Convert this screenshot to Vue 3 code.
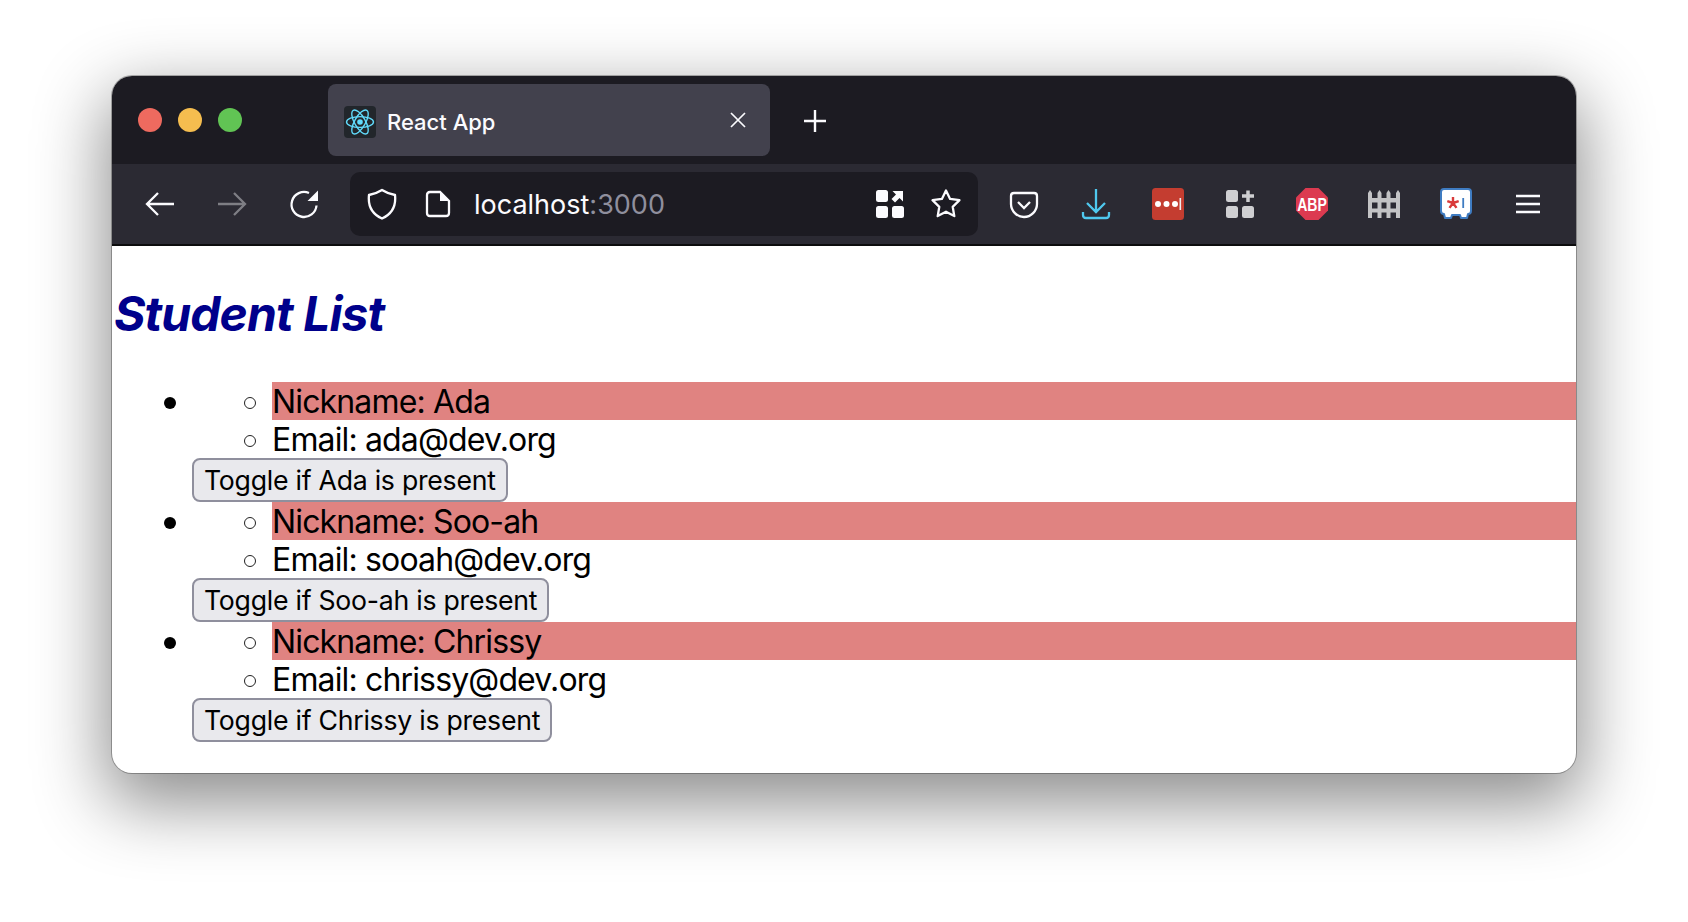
<script setup>
import { reactive } from 'vue'

const students = reactive([
  { nickname: 'Ada', email: 'ada@dev.org', present: false },
  { nickname: 'Soo-ah', email: 'sooah@dev.org', present: false },
  { nickname: 'Chrissy', email: 'chrissy@dev.org', present: false },
])
</script>

<template>
  <div class="page">
    <div class="window">
      <header class="tabbar">
        <div class="lights">
          <span class="light red"></span>
          <span class="light yellow"></span>
          <span class="light green"></span>
        </div>
        <div class="tab">
          <svg class="favicon" viewBox="0 0 32 32" width="32" height="32">
            <rect width="32" height="32" rx="4" fill="#22262b" />
            <g fill="none" stroke="#61dafb" stroke-width="1.4">
              <ellipse cx="16" cy="16" rx="13.5" ry="5.4" />
              <ellipse cx="16" cy="16" rx="13.5" ry="5.4" transform="rotate(60 16 16)" />
              <ellipse cx="16" cy="16" rx="13.5" ry="5.4" transform="rotate(120 16 16)" />
            </g>
            <circle cx="16" cy="16" r="2.8" fill="#61dafb" />
          </svg>
          <span class="tab-title">React App</span>
          <svg class="tab-close" viewBox="0 0 16 16" width="16" height="16">
            <path d="M1 1L15 15M15 1L1 15" stroke="#fbfbfe" stroke-width="1.7" fill="none" />
          </svg>
        </div>
        <svg class="new-tab" viewBox="0 0 24 24" width="24" height="24">
          <path d="M12 1V23M1 12H23" stroke="#fbfbfe" stroke-width="2.4" fill="none" />
        </svg>
      </header>

      <nav class="toolbar">
        <div class="tool">
          <svg viewBox="0 0 32 32" width="32" height="32">
            <path d="M30 16H3M14 5L3 16L14 27" class="line" />
          </svg>
        </div>
        <div class="tool dim">
          <svg viewBox="0 0 32 32" width="32" height="32">
            <path d="M2 16H29M18 5L29 16L18 27" class="line" />
          </svg>
        </div>
        <div class="tool">
          <svg viewBox="0 0 32 32" width="32" height="32">
            <path d="M21 5A12.500 12.500 0 1 0 28.500 17.500" class="line" />
            <path d="M30 2.500V13H19.500Z" fill="#fbfbfe" />
          </svg>
        </div>

        <div class="urlbar">
          <svg class="shield" viewBox="0 0 32 32" width="32" height="32">
            <path d="M16 2C20 4.600 24 6 29 7C30 16 28 25 16 30.500C4 25 2 16 3 7C8 6 12 4.600 16 2Z" class="line" stroke-linejoin="round" />
          </svg>
          <svg class="doc" viewBox="0 0 26 28" width="26" height="28">
            <path d="M15 2H5Q2 2 2 5V23Q2 26 5 26H21Q24 26 24 23V11Z" class="line" />
            <path d="M15 2L24 11H15Z" fill="#fbfbfe" />
          </svg>
          <div class="address">localhost<span class="port">:3000</span></div>
          <svg class="qr" viewBox="0 0 28 28" width="28" height="28">
            <rect width="12" height="12" rx="2.500" fill="#fbfbfe" />
            <rect y="16" width="12" height="12" rx="2.500" fill="#fbfbfe" />
            <rect x="16" y="16" width="12" height="12" rx="2.500" fill="#fbfbfe" />
            <path d="M16.500 1H27V11.500L23.500 8L19 12.500L15.500 9L20 4.500Z" fill="#fbfbfe" />
          </svg>
          <svg class="star" viewBox="0 0 32 32" width="32" height="32">
            <path d="M16 2.500L20.100 10.900L29.500 12.200L22.700 18.800L24.300 28.100L16 23.700L7.700 28.100L9.300 18.800L2.500 12.200L11.900 10.900Z" class="line" stroke-linejoin="round" />
          </svg>
        </div>

        <div class="tool">
          <svg viewBox="0 0 32 32" width="32" height="32">
            <path d="M6 5H26Q29 5 29 8V16C29 23 23 29 16 29C9 29 3 23 3 16V8Q3 5 6 5Z" class="line" />
            <path d="M10 14L16 20L22 14" class="line" />
          </svg>
        </div>
        <div class="tool">
          <svg class="download" viewBox="0 0 32 32" width="32" height="32">
            <path d="M16 1V24M7 15L16 24L25 15M3 24V27Q3 30 6 30H26Q29 30 29 27V24" fill="none" stroke="#4fc8ee" stroke-width="2.300" />
          </svg>
        </div>
        <div class="tool">
          <svg viewBox="0 0 32 32" width="32" height="32">
            <rect width="32" height="32" rx="3.500" fill="#c43d30" />
            <circle cx="6" cy="16" r="3" fill="#fff" />
            <circle cx="14.500" cy="16" r="3" fill="#fff" />
            <circle cx="23" cy="16" r="3" fill="#fff" />
            <rect x="27.500" y="10" width="1.600" height="12" fill="#eee" />
          </svg>
        </div>
        <div class="tool">
          <svg viewBox="0 0 28 28" width="28" height="28">
            <rect width="12" height="12" rx="2.500" fill="#cfcfd2" />
            <rect y="16" width="12" height="12" rx="2.500" fill="#cfcfd2" />
            <rect x="16" y="16" width="12" height="12" rx="2.500" fill="#cfcfd2" />
            <path d="M22 0.500V12M16 6H28" stroke="#cfcfd2" stroke-width="3.500" fill="none" />
          </svg>
        </div>
        <div class="tool">
          <svg viewBox="0 0 32 32" width="32" height="32">
            <path d="M9.500 0H22.500L32 9.500V22.500L22.500 32H9.500L0 22.500V9.500Z" fill="#dc3a50" />
            <text class="abp" text-anchor="middle" transform="translate(16 22.500) scale(0.78 1)">ABP</text>
          </svg>
        </div>
        <div class="tool">
          <svg viewBox="0 0 32 28" width="32" height="28">
            <g fill="#c3c3c5">
              <path d="M0 3L2 0L4 3V28H0Z" />
              <path d="M9.500 3L11.500 0L13.500 3V28H9.500Z" />
              <path d="M18.500 3L20.500 0L22.500 3V28H18.500Z" />
              <path d="M28 3L30 0L32 3V28H28Z" />
              <rect y="8" width="32" height="4.500" />
              <rect y="18.500" width="32" height="4" />
            </g>
          </svg>
        </div>
        <div class="tool">
          <svg viewBox="0 0 32 32" width="32" height="32">
            <path d="M4 1H28Q31 1 31 4V23Q31 26 28 26L27 30H21L20 27H12L11 30H5L4 26Q1 26 1 23V4Q1 1 4 1Z" fill="#fff" stroke="#3f7cc2" stroke-width="2" stroke-linejoin="round" />
            <path d="M13 9V15M13 15L18.700 13.100M13 15L16.500 19.900M13 15L9.500 19.900M13 15L7.300 13.100" stroke="#d93a3a" stroke-width="2.400" fill="none" />
            <rect x="22.300" y="10" width="1.800" height="10" fill="#3f7cc2" />
          </svg>
        </div>
        <div class="tool">
          <svg viewBox="0 0 24 20" width="24" height="20">
            <path d="M0 2H24M0 10H24M0 18H24" stroke="#fbfbfe" stroke-width="2.500" fill="none" />
          </svg>
        </div>
      </nav>

      <main class="content">
        <h1 class="title">Student List</h1>
        <ul class="students">
          <li v-for="student in students" :key="student.nickname">
            <ul class="details">
              <li :class="{ absent: !student.present }">Nickname: {{ student.nickname }}</li>
              <li>Email: {{ student.email }}</li>
            </ul>
            <button class="toggle" @click="student.present = !student.present">
              Toggle if {{ student.nickname }} is present
            </button>
          </li>
        </ul>
      </main>
    </div>
  </div>
</template>

<style>
html, body {
  margin: 0;
  background: #fff;
  overflow: hidden;
}
</style>

<style scoped>
.page {
  height: 922px;
  box-sizing: border-box;
  padding: 76px 112px 0;
  background: #fff;
  font-family: Inter, "Liberation Sans", sans-serif;
}
.window {
  width: 1464px;
  border-radius: 20px;
  overflow: hidden;
  background: #fff;
  box-shadow: 0 0 0 1px rgba(0, 0, 0, 0.28), 0 25px 70px 6px rgba(0, 0, 0, 0.45);
}
.tabbar {
  height: 88px;
  display: flex;
  align-items: center;
  background: #1c1b22;
}
.lights {
  width: 216px;
  padding-left: 26px;
  box-sizing: border-box;
  display: flex;
  gap: 16px;
}
.light {
  width: 24px;
  height: 24px;
  border-radius: 50%;
}
.red { background: #ee6a5f; }
.yellow { background: #f5bd4f; }
.green { background: #61c454; }
.tab {
  width: 442px;
  height: 72px;
  box-sizing: border-box;
  padding: 0 24px 0 16px;
  display: flex;
  align-items: center;
  border-radius: 8px;
  background: #42414d;
  color: #fbfbfe;
}
.favicon {
  flex: none;
  margin-top: 4px;
}
.tab-title {
  flex: 1;
  margin-left: 11px;
  font-size: 22px;
  font-weight: 500;
  line-height: 28px;
  margin-top: 4px;
}
.tab-close { flex: none; }
.new-tab {
  margin-left: 33px;
  margin-top: 2px;
}
.toolbar {
  height: 82px;
  box-sizing: border-box;
  padding-left: 12px;
  display: flex;
  align-items: center;
  background: #2b2a33;
  border-bottom: 2px solid #0c0c0d;
}
.tool {
  width: 72px;
  height: 64px;
  flex: none;
  display: flex;
  align-items: center;
  justify-content: center;
}
.download { margin-right: 1px; }
.dim { opacity: 0.4; }
.line {
  fill: none;
  stroke: #fbfbfe;
  stroke-width: 2.300;
}
.urlbar {
  width: 628px;
  height: 64px;
  margin: 0 10px;
  flex: none;
  box-sizing: border-box;
  padding-left: 16px;
  display: flex;
  align-items: center;
  border-radius: 10px;
  background: #1c1b22;
  color: #fbfbfe;
}
.shield { flex: none; }
.doc {
  flex: none;
  margin-left: 27px;
}
.address {
  flex: 1;
  margin-left: 23px;
  font-size: 27px;
  line-height: 34px;
  padding-top: 1px;
}
.port { color: #8f8f9d; }
.qr {
  flex: none;
  margin-right: 26px;
}
.star {
  flex: none;
  margin-right: 16px;
}
.abp {
  font-family: "Liberation Sans", sans-serif;
  font-size: 18px;
  font-weight: 700;
  fill: #fff;
}
.content {
  height: 527px;
  overflow: hidden;
  color: #000;
}
.title {
  margin: 32px 0;
  padding-left: 2px;
  font-size: 48px;
  line-height: 72px;
  font-weight: 700;
  font-style: italic;
  letter-spacing: -0.9px;
  color: #00008b;
}
.students, .details {
  margin: 0;
  padding: 0 0 0 80px;
  list-style: none;
  font-size: 32px;
  letter-spacing: -0.85px;
}
.students > li, .details > li {
  position: relative;
}
.details > li {
  height: 38px;
  line-height: 40px;
}
.students > li::before {
  content: "";
  position: absolute;
  left: -28px;
  top: 15px;
  width: 12px;
  height: 12px;
  border-radius: 50%;
  background: #000;
}
.details > li::before {
  content: "";
  position: absolute;
  left: -28px;
  top: 15px;
  width: 12px;
  height: 12px;
  box-sizing: border-box;
  border: 1.500px solid #222;
  border-radius: 50%;
  background: #fff;
}
.absent { background: #e08381; }
.toggle {
  display: block;
  height: 44px;
  box-sizing: border-box;
  padding: 0 10px;
  border: 2px solid #8f8f9d;
  border-radius: 8px;
  background: #e9e9ed;
  color: #000;
  font-family: Inter, "Liberation Sans", sans-serif;
  font-size: 26.670px;
  letter-spacing: -0.26px;
  line-height: 40px;
}
</style>
